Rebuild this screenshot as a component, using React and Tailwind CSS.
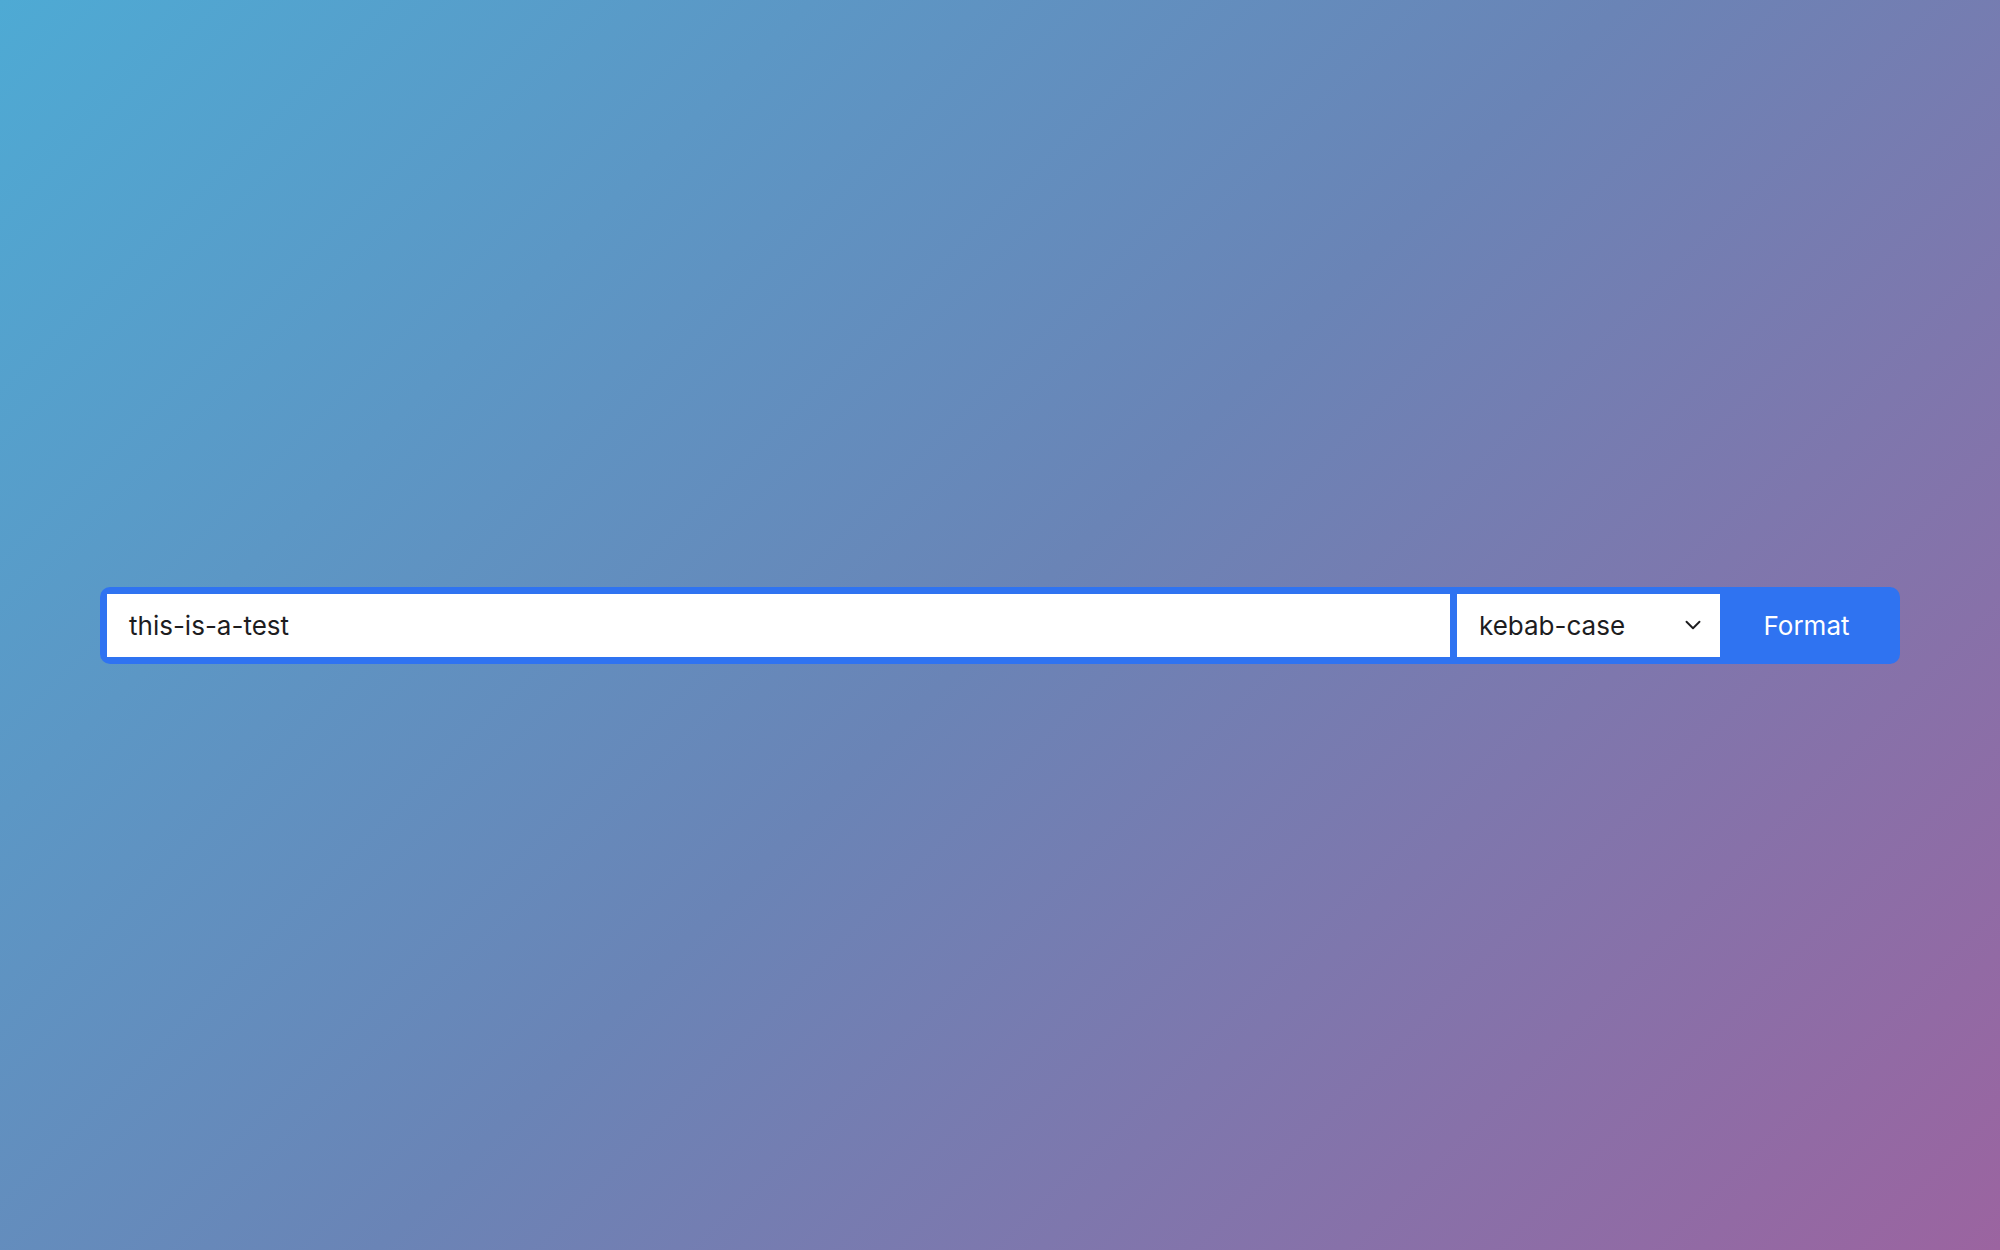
import { ChevronDown } from 'lucide-react';

export default function App() {
  return (
    <div className="min-h-screen w-full flex items-center justify-center bg-[linear-gradient(135deg,#4eaad4_0%,#6a84b6_50%,#9b64a0_100%)] font-['Inter',sans-serif]">
      <div className="w-[1800px] flex items-stretch bg-[#2f73f1] rounded-[10px] p-[7px]">
        {/* text input */}
        <div className="flex-1 bg-white h-[63px] flex items-center pl-[22px]">
          <span className="text-[26px] text-[#1d1d1f]">this-is-a-test</span>
        </div>
        {/* case select */}
        <div className="ml-[7px] w-[263px] bg-white flex items-center justify-between pl-[22px] pr-[14px]">
          <span className="text-[26px] text-[#1d1d1f]">kebab-case</span>
          <ChevronDown size={26} strokeWidth={1.75} className="text-[#1d1d1f]" />
        </div>
        {/* button */}
        <div className="w-[173px] flex items-center justify-center text-white text-[26px]">
          Format
        </div>
      </div>
    </div>
  );
}
